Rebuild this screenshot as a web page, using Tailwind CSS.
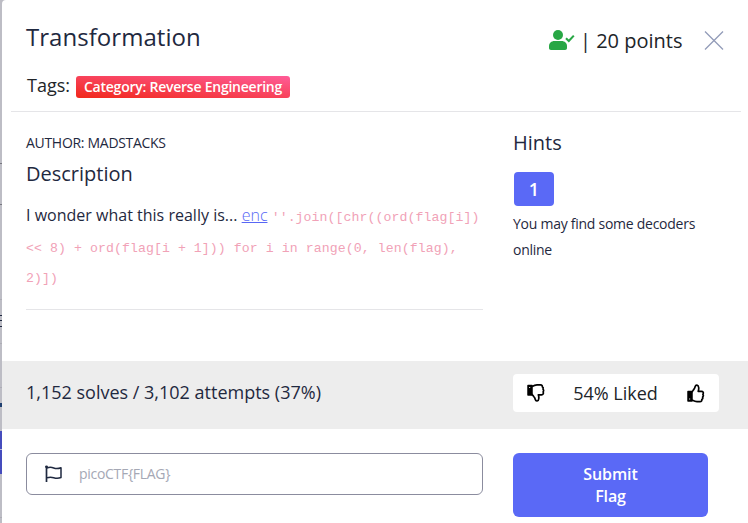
<!DOCTYPE html>
<html lang="en">
<head>
<meta charset="utf-8">
<title>Transformation</title>
<script src="https://cdn.jsdelivr.net/npm/@tailwindcss/browser@4"></script>
</head>
<body class="flex h-[523px] w-[748px] overflow-hidden bg-[#bdbdc5] font-['Open_Sans','Noto_Sans',sans-serif] text-[#1f2940]">
<aside class="flex w-0.5 shrink-0 flex-col bg-[#bdbdc5]">
  <div class="mt-[163px] h-px bg-[#77777f]"></div>
  <div class="mt-10 h-px bg-[#77777f]"></div>
  <div class="mt-[94px] h-px bg-[#adadb5]"></div>
  <div class="mt-[15px] h-px bg-[#1f2940]"></div>
  <div class="mt-1 h-px bg-[#1f2940]"></div>
  <div class="mt-[5px] h-px bg-[#1f2940]"></div>
  <div class="mt-4 h-px bg-[#adadb5]"></div>
  <div class="mt-[43px] h-px bg-[#adadb5]"></div>
  <div class="mt-[15px] h-1 bg-[#1f4070]"></div>
  <div class="mt-6 h-[43px] bg-[#454cbd] pt-[18px]"><div class="h-px bg-[#b9bbdc]"></div></div>
  <div class="mt-[43px] h-px bg-[#adadb5]"></div>
</aside>
<main class="flex w-[746px] shrink-0 flex-col rounded-tl-[4px] bg-white">
  <header class="mr-[7px] ml-[9px] flex h-28 shrink-0 justify-between border-b border-[#e5e5e8] pl-[15px]">
    <div>
      <h1 class="mt-[20px] text-[24px] leading-[34px] whitespace-nowrap tracking-[0.04px]">Transformation</h1>
      <div class="mt-[17px] flex items-center text-[18px] leading-[28px] whitespace-nowrap text-[#212529]">
        <span class="w-[50px] pl-px">Tags:</span>
        <span class="mt-[4px] h-[22px] w-[214px] rounded-[3px] bg-[linear-gradient(to_top_right,#f1281b,#ff5c98)] text-center text-[14px] leading-[21px] font-semibold tracking-[-0.24px] text-white">Category: Reverse Engineering</span>
      </div>
    </div>
    <div class="mt-[26px] flex h-[30px] w-[192px] items-center text-[20px] text-[#212529]">
      <svg class="mt-[-2px] h-[22px] w-[26px] shrink-0" viewBox="0 0 26 22" fill="none"><circle cx="9" cy="6" r="5" fill="#28a745"/><path d="M5.500 12h7c3.300 0 5.500 2.300 5.500 5v2c0 1.200-.8 2-2 2H2c-1.200 0-2-.8-2-2v-2c0-2.700 2.200-5 5.500-5z" fill="#28a745"/><path d="M17 9.300l2.800 2.700L24.800 6.600" stroke="#28a745" stroke-width="2.100"/></svg>
      <span class="ml-[5px] whitespace-nowrap">| 20 points</span>
      <svg class="mr-[17px] ml-auto h-5 w-5 shrink-0" viewBox="0 0 20 20" fill="none"><path d="M1 0.500l18 18M19 0.500L1 18.500" stroke="#929bb8" stroke-width="1.300"/></svg>
    </div>
  </header>
  <section class="flex h-[249px] shrink-0 pl-6">
    <div class="w-[457px]">
      <p class="mt-[20px] text-[14px] leading-[22px] tracking-[-0.3px]">AUTHOR: MADSTACKS</p>
      <h2 class="mt-[5px] text-[20px] leading-[30px]">Description</h2>
      <p class="mt-[11px] text-[16px] leading-[30.600px] whitespace-nowrap"><span class="tracking-[0.01px]">I wonder what this really is...</span> <a class="font-light text-[#5867f5] underline">enc</a> <code class="font-['Liberation_Mono',monospace] text-[13.200px] leading-none tracking-[0.080px] text-[#f1a2b7]">''.join([chr((ord(flag[i])<br>&lt;&lt; 8) + ord(flag[i + 1])) for i in range(0, len(flag),<br>2)])</code></p>
      <hr class="mt-[17px] border-[#e5e5e8]">
    </div>
    <div class="ml-[30px]">
      <h2 class="mt-[16px] text-[20px] leading-[30px]">Hints</h2>
      <button class="mt-[14px] ml-px block h-[34px] w-10 rounded-[4px] bg-[#5a69f6] text-[18px] font-semibold text-white">1</button>
      <p class="mt-[5px] text-[14px] leading-[26px] tracking-[-0.260px] whitespace-nowrap">You may find some decoders<br>online</p>
    </div>
  </section>
  <section class="flex h-[68px] shrink-0 bg-[#ededed] pl-6">
    <div class="w-[487px] pt-[17px] text-[18px] leading-[28px]">1,152 solves / 3,102 attempts (37%)</div>
    <div class="mt-[13px] flex h-[38px] w-[206px] items-center justify-between rounded-[4px] bg-white pr-[14px] pl-[13px] text-[18px] text-[#212529]">
      <svg class="h-5 w-[19px]" viewBox="0 0 19 20" fill="none" stroke="#000"><path d="M2 2.500h4v9.500H2z" fill="#000" stroke-width="1.500" stroke-linejoin="round"/><path d="M6 3.500C8 2.300 9 1.800 11 1.800h3.500c1.500 0 2 1 1.800 2 1 .6 1.100 1.600.7 2.400.8.8.8 2 .1 2.600.9 1.700-.1 3-1.500 3h-3.300c.8 2 .9 6-1.200 6.200-2.500.2-1.300-2.300-3-4C7.200 13 6.700 11.700 5.800 11.200" stroke-width="1.700" stroke-linejoin="round"/><path d="M3.200 4.500h1" stroke="#fff"/></svg>
      <span>54% Liked</span>
      <svg class="h-5 w-[19px]" viewBox="0 0 19 20" fill="none" stroke="#000"><path d="M2 8.500h4v9.500H2z" fill="#000" stroke-width="1.500" stroke-linejoin="round"/><path d="M6 17c2 1 3 1.600 5 1.600h3c1.500 0 2-.9 1.800-2 1-.6 1.200-1.600.8-2.500.8-.8.9-1.900.3-2.700 1-1.700 0-3.100-1.400-3.100h-3.300c.8-2 .9-6-1.200-6.200-2.500-.2-1.300 2.300-3 4C7.200 7 6.700 8.500 5.800 9" stroke-width="1.700" stroke-linejoin="round"/><path d="M3.200 16h1" stroke="#fff"/></svg>
    </div>
  </section>
  <footer class="flex shrink-0 gap-[30px] pt-6 pl-6">
    <div class="flex h-[42px] w-[457px] items-center rounded-[6px] border border-[#8b8c9e] pl-[18px]">
      <svg class="h-[18px] w-[18px]" viewBox="0 0 18 18" fill="none" stroke="#1f2940"><path d="M1.500 1v16" stroke-width="1.700"/><circle cx="1.500" cy="1.800" r="1.400" fill="#1f2940" stroke="none"/><path d="M2 3c2.500-1 4.500-.8 6.700 0s4.800.7 7.300-.3v9.800c-2.500 1-5 .9-7.300.2s-4.200-.8-6.700.1" stroke-width="1.500" stroke-linejoin="round"/></svg>
      <span class="mt-[-2px] ml-[16px] text-[14px] tracking-[-0.300px] text-[#a5a8b5]">picoCTF{FLAG}</span>
    </div>
    <button class="h-16 w-[195px] rounded-[6px] bg-[#5a69f6] text-[16px] leading-[22px] font-semibold tracking-[-0.100px] text-white">Submit<br>Flag</button>
  </footer>
</main>
</body>
</html>
